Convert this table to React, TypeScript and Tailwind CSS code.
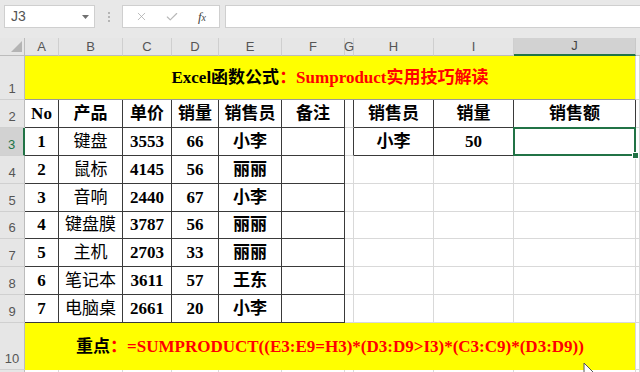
import React from "react";
import { X, Check } from "lucide-react";

const cols = ["A", "B", "C", "D", "E", "F", "G", "H", "I", "J"];

const data: [string, string, string, string, string][] = [
  ["1", "键盘", "3553", "66", "小李"],
  ["2", "鼠标", "4145", "56", "丽丽"],
  ["3", "音响", "2440", "67", "小李"],
  ["4", "键盘膜", "3787", "56", "丽丽"],
  ["5", "主机", "2703", "33", "丽丽"],
  ["6", "笔记本", "3611", "57", "王东"],
  ["7", "电脑桌", "2661", "20", "小李"],
];

function Cell({
  r,
  b,
  children,
  cls,
}: {
  r?: boolean;
  b?: boolean;
  children?: React.ReactNode;
  cls?: string;
}) {
  return (
    <div
      className={`flex items-center justify-center border-r border-b overflow-visible whitespace-nowrap ${
        r ? "border-r-[#3a3a3a]" : "border-r-[#d9d9d9]"
      } ${b ? "border-b-[#3a3a3a]" : "border-b-[#d9d9d9]"} ${cls ?? ""}`}
    >
      {children}
    </div>
  );
}

function RowHead({ n, active }: { n?: string; active?: boolean }) {
  return (
    <div
      className={`flex items-end justify-center pb-[1px] text-[13px] font-['Liberation_Sans',sans-serif] font-normal border-b border-b-[#d0d0d0] ${
        active
          ? "bg-[#d2d2d2] border-r-2 border-r-[#217346] text-[#217346]"
          : "bg-[#e6e6e6] border-r border-r-[#bcbcbc] text-[#555]"
      }`}
    >
      {n}
    </div>
  );
}

export default function App() {
  return (
    <div className="relative w-[640px] h-[372px] overflow-hidden bg-white font-['Liberation_Serif','Noto_Sans_CJK_SC',serif] text-black">
      {/* formula bar */}
      <div className="h-[38px] bg-[#e8e8e8] flex items-start pt-[5px] pl-[4px] font-['Liberation_Sans',sans-serif]">
        <div className="w-[91px] h-[23px] bg-white border border-[#cfcfcf] flex items-center justify-between pl-[6px] pr-[5px]">
          <span className="text-[14px] text-[#555]">J3</span>
          <svg width="7" height="4" viewBox="0 0 7 4">
            <polygon points="0,0 7,0 3.5,4" fill="#707070" />
          </svg>
        </div>
        <div className="w-[27px] h-[23px] flex flex-col items-center justify-center gap-[2px]">
          <span className="w-[2px] h-[2px] bg-[#b5b5b5]" />
          <span className="w-[2px] h-[2px] bg-[#b5b5b5]" />
          <span className="w-[2px] h-[2px] bg-[#b5b5b5]" />
        </div>
        <div className="w-[98px] h-[23px] bg-white border border-[#cfcfcf] flex items-center">
          <div className="w-[36px] flex justify-center">
            <X size={13} strokeWidth={1.4} color="#a8a8a8" />
          </div>
          <div className="w-[26px] flex justify-center">
            <Check size={14} strokeWidth={2} color="#b8b8b8" />
          </div>
          <div className="w-[34px] flex justify-center items-baseline text-[13px] italic font-['Liberation_Serif',serif] text-[#444] leading-none">
            <span>f</span>
            <span className="text-[10px] leading-none">x</span>
          </div>
        </div>
        <div className="ml-[5px] flex-1 h-[23px] bg-white border border-[#cfcfcf] border-r-0" />
      </div>

      {/* sheet grid */}
      <div className="grid grid-cols-[25px_34px_64px_49px_47px_63px_63px_9px_80px_80px_122px_4px] grid-rows-[18px_44px_28px_28px_28px_28px_27px_28px_28px_28px_47px_10px]">
        {/* column header row */}
        <div className="relative bg-[#e6e6e6] border-r border-r-[#bcbcbc] border-b border-b-[#bcbcbc]">
          <svg className="absolute right-[2px] bottom-[3px]" width="11" height="11" viewBox="0 0 11 11">
            <polygon points="11,0 11,11 0,11" fill="#b4b4b4" />
          </svg>
        </div>
        {cols.map((c) =>
          c === "J" ? (
            <div
              key={c}
              className="flex items-center justify-center bg-[#d2d2d2] border-r border-r-[#c8c8c8] border-b-2 border-b-[#217346] text-[13px] text-[#444] font-['Liberation_Sans',sans-serif]"
            >
              {c}
            </div>
          ) : (
            <div
              key={c}
              className="flex items-center justify-center bg-[#e6e6e6] border-r border-r-[#cfcfcf] border-b border-b-[#bcbcbc] text-[13px] text-[#555] font-['Liberation_Sans',sans-serif]"
            >
              {c}
            </div>
          )
        )}
        <div className="bg-[#e6e6e6] border-b border-b-[#bcbcbc]" />

        {/* row 1 */}
        <RowHead n="1" />
        <div className="col-span-10 flex items-center justify-center bg-[#ffff00] border-b border-b-[#9a9a9a] border-r border-r-[#d9d9d9] text-[17px] font-bold whitespace-nowrap">
          <span>Excel函数公式</span>
          <span className="text-[#ff0000]">：Sumproduct实用技巧解读</span>
        </div>
        <Cell />

        {/* row 2 */}
        <RowHead n="2" />
        {["No", "产品", "单价", "销量", "销售员", "备注"].map((h) => (
          <Cell key={h} r b cls="text-[17px] font-bold">
            {h}
          </Cell>
        ))}
        <Cell r />
        <Cell r b cls="text-[17px] font-bold">销售员</Cell>
        <Cell r b cls="text-[17px] font-bold">销量</Cell>
        <Cell r b cls="text-[17px] font-bold">销售额</Cell>
        <Cell />

        {/* rows 3-9 */}
        {data.map((row, i) => (
          <React.Fragment key={i}>
            <RowHead n={String(i + 3)} active={i === 0} />
            <Cell r b cls="text-[17px] font-bold">{row[0]}</Cell>
            <Cell r b cls="text-[17px]">{row[1]}</Cell>
            <Cell r b cls="text-[17px] font-bold">{row[2]}</Cell>
            <Cell r b cls="text-[17px] font-bold">{row[3]}</Cell>
            <Cell r b cls="text-[17px] font-bold">{row[4]}</Cell>
            <Cell r b />
            {i === 0 ? (
              <>
                <Cell r />
                <Cell r b cls="text-[17px] font-bold">小李</Cell>
                <Cell r b cls="text-[17px] font-bold">50</Cell>
                <div className="relative border-r border-b border-r-[#3a3a3a] border-b-[#3a3a3a]">
                  <div className="absolute -left-[1px] -top-[1px] right-[-1px] bottom-[-1px] border-2 border-[#217346]" />
                  <div className="absolute -right-[4px] -bottom-[4px] w-[7px] h-[7px] bg-[#217346] border border-white" />
                </div>
                <Cell />
              </>
            ) : (
              <>
                <Cell />
                <Cell />
                <Cell />
                <Cell />
                <Cell />
              </>
            )}
          </React.Fragment>
        ))}

        {/* row 10 */}
        <RowHead n="10" />
        <div className="col-span-10 flex items-center justify-center bg-[#ffff00] border-r border-r-[#d9d9d9] text-[17px] font-bold whitespace-nowrap">
          <span>重点</span>
          <span className="text-[#ff0000]">：=SUMPRODUCT((E3:E9=H3)*(D3:D9&gt;I3)*(C3:C9)*(D3:D9))</span>
        </div>
        <Cell />

        {/* row 11 */}
        <RowHead />
        {cols.map((c) => (
          <Cell key={"r11" + c} />
        ))}
        <Cell />
      </div>

      {/* mouse cursor */}
      <svg className="absolute left-[583px] top-[362px]" width="14" height="20" viewBox="0 0 14 20">
        <path d="M1 1 L1 16 L4.5 12.5 L7 18 L9 17 L6.5 11.5 L11.5 11.5 Z" fill="white" stroke="#555" strokeWidth="1" />
      </svg>
    </div>
  );
}
